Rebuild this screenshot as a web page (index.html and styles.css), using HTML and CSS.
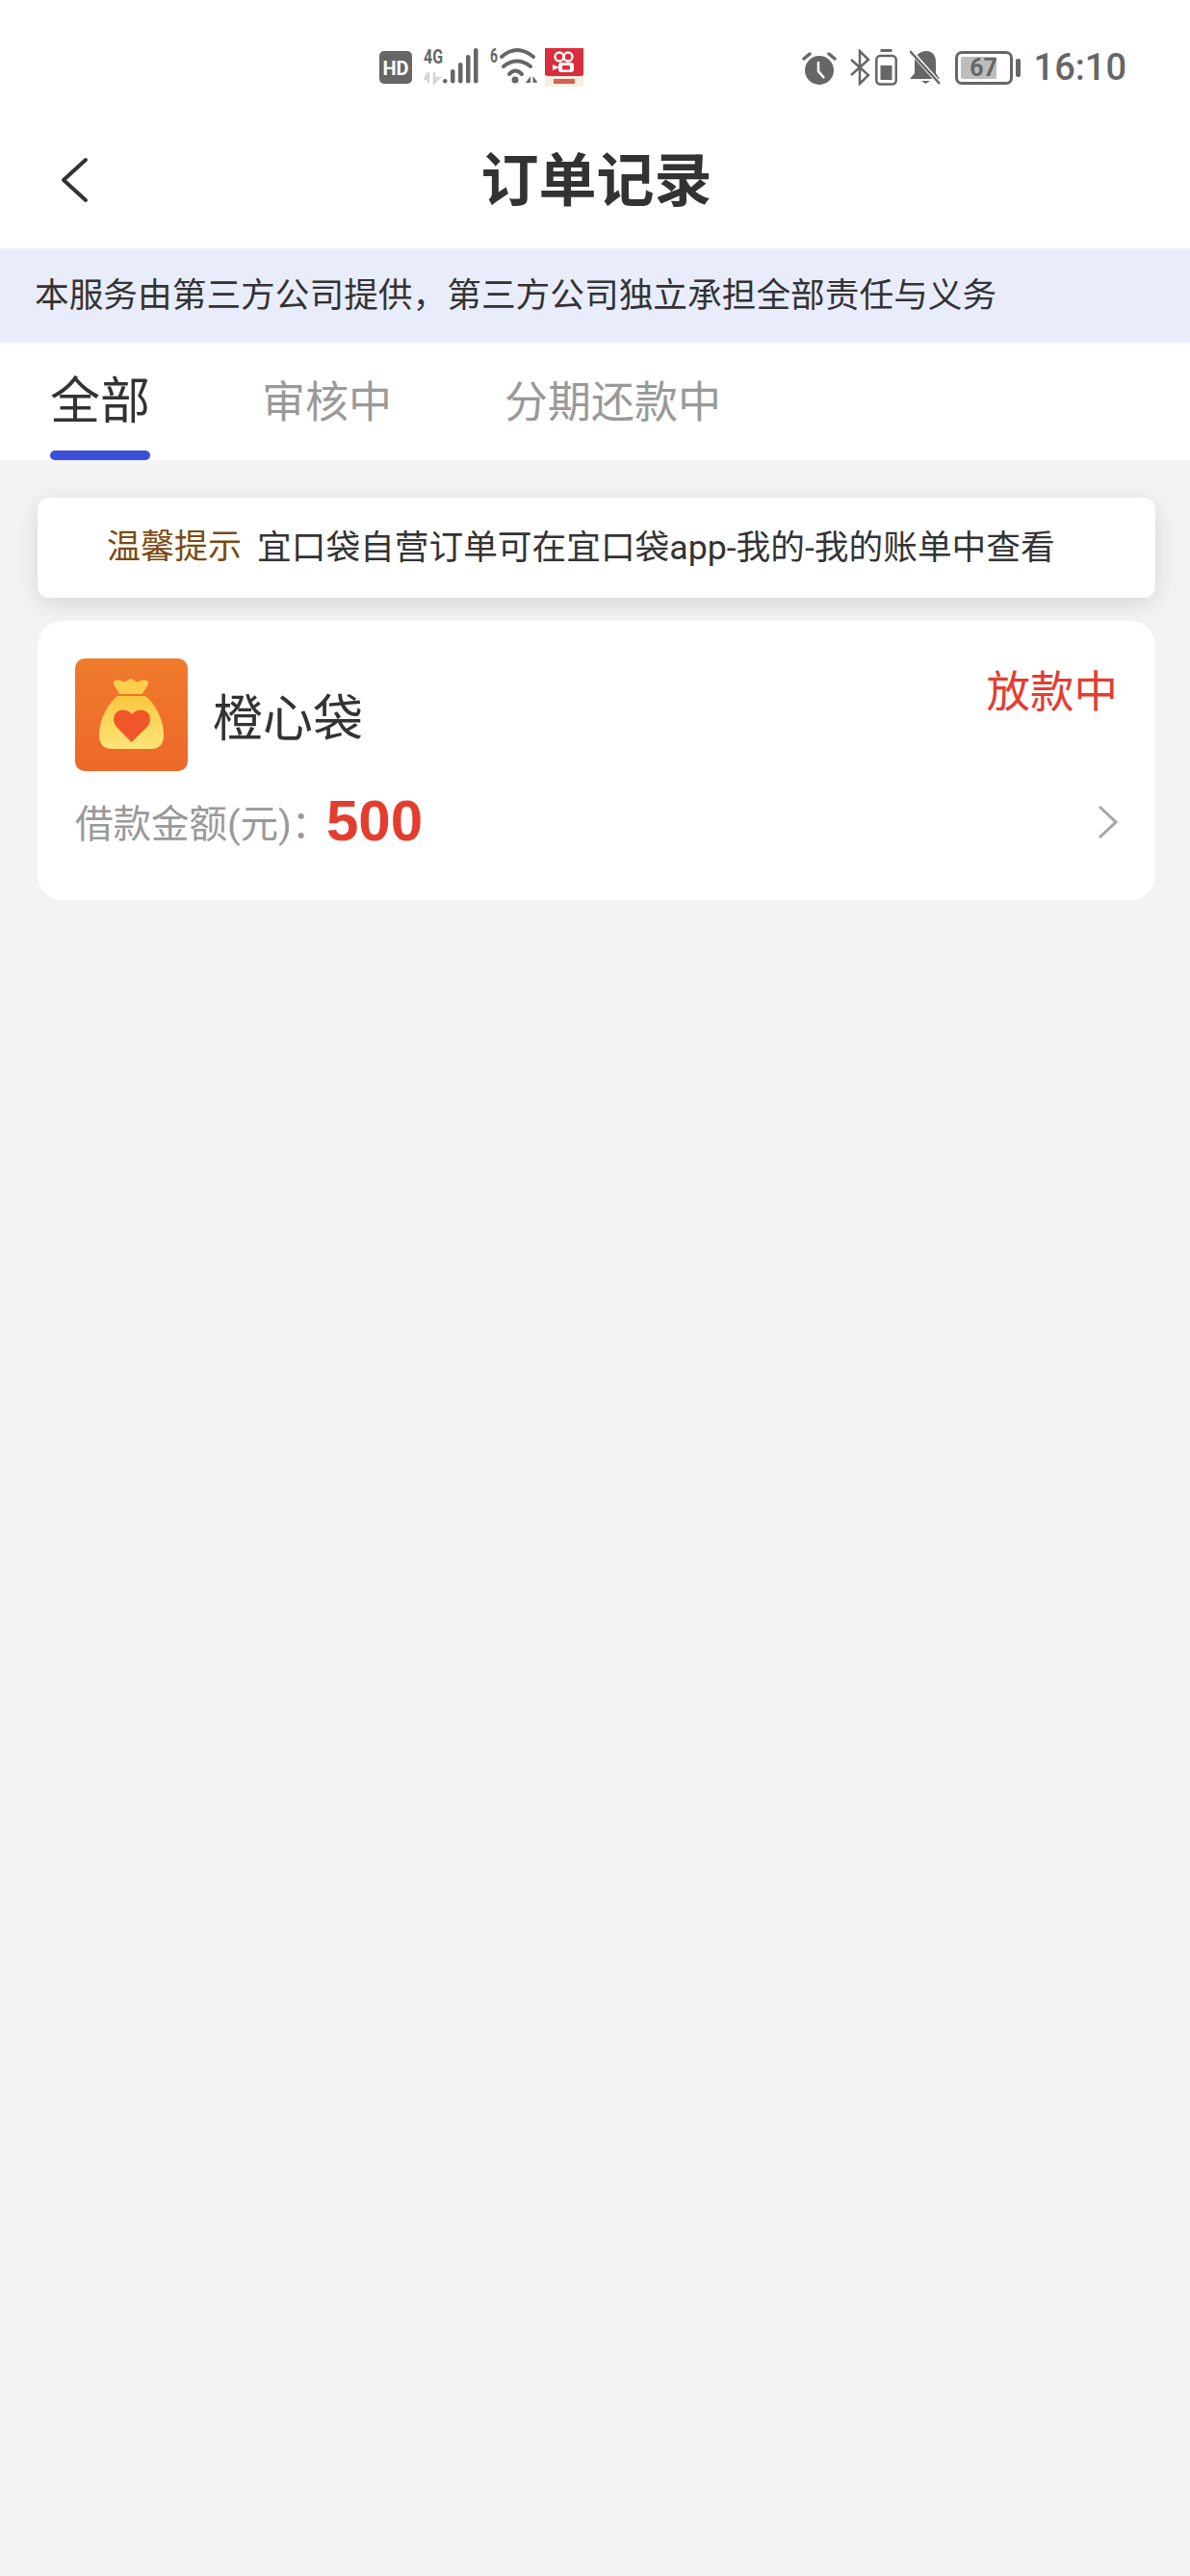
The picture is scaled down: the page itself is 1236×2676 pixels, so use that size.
FILE: index.html
```html
<!DOCTYPE html>
<html lang="zh-CN">
<head>
<meta charset="utf-8">
<title>订单记录</title>
<link rel="stylesheet" href="styles.css">
</head>
<body>
<div class="page">
  <header class="status">
    <div class="status-left">
      <svg class="ic-hd" width="34" height="34" viewBox="0 0 34 34"><rect width="34" height="34" rx="5" fill="#666"/><text x="17" y="24.500" text-anchor="middle" class="hd-t">HD</text></svg>
      <svg class="ic-sig" width="57" height="48" viewBox="0 -8 57 48">
        <text x="0" y="16" class="sig-t" textLength="20" lengthAdjust="spacingAndGlyphs">4G</text>
        <path d="M5 25v11M5 25l-4 7h4M11 25v11l5-5h-5" stroke="#d4d4d4" stroke-width="2.500" fill="none"/>
        <rect x="20" y="32" width="4.500" height="4.500" rx="2.200" fill="#666"/>
        <rect x="28" y="22" width="4.500" height="14.500" rx="2.200" fill="#666"/>
        <rect x="36" y="15" width="4.500" height="21.500" rx="2.200" fill="#666"/>
        <rect x="44" y="7" width="4.500" height="29.500" rx="2.200" fill="#666"/>
        <rect x="52" y="0" width="4.500" height="36.500" rx="2.200" fill="#666"/>
      </svg>
      <svg class="ic-wifi" width="50" height="48" viewBox="0 -8 50 48">
        <text x="0" y="15" class="sig-t" textLength="8" lengthAdjust="spacingAndGlyphs">6</text>
        <path d="M12 9Q28-5 45 9M14 19Q28 8 42 19M20 27Q26 20 33 27" stroke="#666" stroke-width="4" fill="none" stroke-linecap="round"/>
        <circle cx="26" cy="33" r="3.500" fill="#666"/>
        <path d="M37 36l5-7v7zM44.500 29v7l5-.5z" fill="#666"/>
      </svg>
      <svg class="ic-app" width="40" height="40" viewBox="0 0 40 40">
        <rect width="40" height="40" fill="#fbeee0"/>
        <path d="M0 0h40v28l-3 1H3l-3-1z" fill="#d92f3d"/>
        <circle cx="15" cy="9" r="4.500" fill="none" stroke="#fff" stroke-width="2.400"/>
        <circle cx="24" cy="9" r="4.500" fill="none" stroke="#fff" stroke-width="2.400"/>
        <rect x="14" y="15" width="16" height="10" rx="3" fill="#fff"/>
        <path d="M8 17l7 3-7 3z" fill="#fff"/>
        <rect x="18" y="18" width="8" height="4.500" rx="1" fill="#d92f3d"/>
        <rect x="9" y="32" width="22" height="5" fill="#d2614f"/>
      </svg>
    </div>
    <div class="status-right">
      <svg width="36" height="36" viewBox="0 0 36 36">
        <circle cx="18" cy="21" r="15" fill="#666"/>
        <path d="M17 12v10l6 7" stroke="#fff" stroke-width="2.500" fill="none"/>
        <path d="M2 9l6-5M34 9l-6-5" stroke="#666" stroke-width="3.500" stroke-linecap="round"/>
      </svg>
      <svg class="ic-bt" width="22" height="38" viewBox="0 0 22 38">
        <path d="M2 11l18 16-9 9V2l9 9L2 27" stroke="#666" stroke-width="2.500" fill="none"/>
      </svg>
      <svg class="ic-batt" width="23" height="38" viewBox="0 0 23 38">
        <rect x="5.500" y="0" width="12" height="3" fill="#666"/>
        <rect x="1.300" y="7" width="20.400" height="29.500" rx="4" fill="none" stroke="#666" stroke-width="2.500"/>
        <rect x="5.500" y="17" width="12" height="15" fill="#666"/>
      </svg>
      <svg class="ic-bell" width="32" height="36" viewBox="0 0 32 36">
        <path d="M17 1c7 0 10 5 10 11v12l4 6H0l5-6V12C5 6 10 1 17 1z" fill="#666"/>
        <path d="M12 32h9l-4.500 3z" fill="#666"/>
        <path d="M0 0l31 35" stroke="#fff" stroke-width="4.500"/>
        <path d="M0 1l31 34" stroke="#666" stroke-width="2.500"/>
      </svg>
      <div class="battery">
        <div class="battery-body"><span class="battery-fill"></span><span class="battery-num">67</span></div>
        <span class="battery-tip"></span>
      </div>
      <span class="clock">16:10</span>
    </div>
  </header>

  <nav class="navbar">
    <svg class="back" width="32" height="48" viewBox="0 0 32 48"><path d="M27 3L4 24l23 21" stroke="#333" stroke-width="4" fill="none" stroke-linecap="round" stroke-linejoin="round"/></svg>
    <h1 class="title">订单记录</h1>
  </nav>

  <div class="notice">本服务由第三方公司提供，第三方公司独立承担全部责任与义务</div>

  <div class="tabs">
    <div class="tab tab-active">全部<span class="tab-bar"></span></div>
    <div class="tab tab-2">审核中</div>
    <div class="tab tab-3">分期还款中</div>
  </div>

  <main class="content">
    <div class="tip"><span class="tip-label">温馨提示</span><span class="tip-text">宜口袋自营订单可在宜口袋app-我的-我的账单中查看</span></div>
    <section class="card">
      <div class="card-top">
        <div class="brand">
          <svg class="logo" width="117" height="117" viewBox="0 0 117 117">
            <defs>
              <linearGradient id="bg" x1="0" y1="0" x2="0" y2="1"><stop offset="0" stop-color="#ee7b2c"/><stop offset="1" stop-color="#ee682a"/></linearGradient>
              <linearGradient id="bag" x1="0" y1="0" x2="0" y2="1"><stop offset="0" stop-color="#fbc83f"/><stop offset="1" stop-color="#fde47a"/></linearGradient>
            </defs>
            <rect width="117" height="117" rx="10" fill="url(#bg)"/>
            <path d="M40 24c3-2 7-2 10 0 3 1 5-2 8-3 3 1 5 4 8 3 3-2 7-2 10 0 1 4-5 9-6 13H46c-1-4-7-9-6-13z" fill="#fbcf4c"/>
            <path d="M44 39h29c8 6 19 22 19 41 0 9-5 14-13 14H38c-8 0-13-5-13-14 0-19 11-35 19-41z" fill="url(#bag)"/>
            <path d="M58.500 87L44 72c-5-5-5-12-1-16 5-4 12-3 16 2 4-5 11-6 16-2 4 4 4 11-1 16z" fill="#f0562a"/>
          </svg>
          <span class="brand-name">橙心袋</span>
        </div>
        <span class="state">放款中</span>
      </div>
      <div class="card-bottom">
        <div class="amount"><span class="amount-label">借款金额(元)：</span><span class="amount-value">500</span></div>
        <svg class="chev" width="22" height="36" viewBox="0 0 22 36"><path d="M3 2l17 16L3 34" stroke="#a6a6a6" stroke-width="3" fill="none"/></svg>
      </div>
    </section>
  </main>
</div>
</body>
</html>
```

FILE: styles.css
```css
* { box-sizing: border-box; margin: 0; padding: 0; }
html, body { width: 1236px; height: 2676px; overflow: hidden; }
body { background: #f3f3f4; font-family: Roboto, "Noto Sans CJK SC", sans-serif; color: #333; }
.page { display: flex; flex-direction: column; height: 2676px; }

.status { height: 120px; flex: none; background: #fff; display: flex; justify-content: space-between; align-items: flex-start; padding: 50px 66px 0 394px; }
.status-left { display: flex; align-items: center; height: 40px; }
.status-right { display: flex; align-items: center; height: 40px; }
.ic-sig { margin-left: 12px; margin-top: -8px; }
.ic-wifi { margin-left: 12px; margin-top: -8px; }
.ic-app { margin-left: 7px; }
.hd-t { font: 700 20px Roboto, sans-serif; fill: #fff; }
.sig-t { font: 700 20px Roboto, sans-serif; fill: #666; }
.ic-bt { margin-left: 13px; }
.ic-batt { margin-left: 5px; }
.ic-bell { margin-left: 13px; }
.battery { display: flex; align-items: center; gap: 3px; margin-left: 15px; }
.battery-body { position: relative; width: 60px; height: 35px; border: 3px solid #666; border-radius: 7px; }
.battery-fill { position: absolute; left: 3px; top: 3px; bottom: 3px; width: 37px; background: #bdbdbd; border-radius: 2px; }
.battery-num { position: relative; display: block; text-align: center; font: 700 25px/29px Roboto, sans-serif; color: #666; }
.battery-tip { width: 5px; height: 19px; background: #666; border-radius: 2px; }
.clock { font: 500 38px/40px Roboto, sans-serif; color: #666; margin-left: 14px; }

.navbar { position: relative; height: 138px; flex: none; background: #fff; display: flex; align-items: center; justify-content: center; }
.back { position: absolute; left: 62px; top: 43px; }
.title { font-size: 60px; font-weight: 700; line-height: 70px; color: #333; margin-left: 3px; }

.notice { height: 98px; flex: none; background: #e9edfb; font-size: 35.700px; line-height: 98px; padding-left: 36px; color: #333; }

.tabs { position: relative; height: 122px; flex: none; background: #fff; display: flex; padding-left: 52px; font-size: 45px; line-height: 126px; color: #999; }
.tab { position: relative; height: 122px; }
.tab-active { color: #333; font-size: 52px; width: 104px; line-height: 123px; }
.tab-2 { margin-left: 116px; }
.tab-3 { margin-left: 117px; }
.tab-bar { position: absolute; left: 0; right: 0; bottom: 0; height: 10px; border-radius: 5px; background: #3b50d9; }

.content { flex: 1; padding: 39px 36px 0 39px; display: flex; flex-direction: column; gap: 24px; }
.tip { height: 104px; background: #fff; border-radius: 12px; box-shadow: 0 6px 24px rgba(0,0,0,.12); display: flex; align-items: center; padding: 0 0 0 72px; font-size: 35px; line-height: 50px; color: #333; }
.tip-label { color: #7b4a12; margin-right: 16px; }
.tip-text { font-size: 35.700px; }
.card { height: 290px; background: #fff; border-radius: 26px; padding: 39px 39px 0 39px; }
.card-top { display: flex; justify-content: space-between; align-items: flex-start; }
.brand { display: flex; align-items: center; gap: 26px; }
.brand-name { font-size: 52px; line-height: 60px; color: #333; padding-top: 10px; }
.state { font-size: 45.500px; line-height: 60px; color: #e43d30; margin-top: 6px; }
.card-bottom { display: flex; justify-content: space-between; align-items: center; margin-top: 28px; height: 50px; }
.amount { display: flex; align-items: flex-start; }
.amount-label { font-size: 39.500px; line-height: 50px; color: #999; width: 261px; white-space: nowrap; padding-top: 5px; }
.amount-value { font: 700 60px/50px "Liberation Sans", sans-serif; color: #e43d30; margin-top: 1px; }
.chev { margin-right: 0; }
```
